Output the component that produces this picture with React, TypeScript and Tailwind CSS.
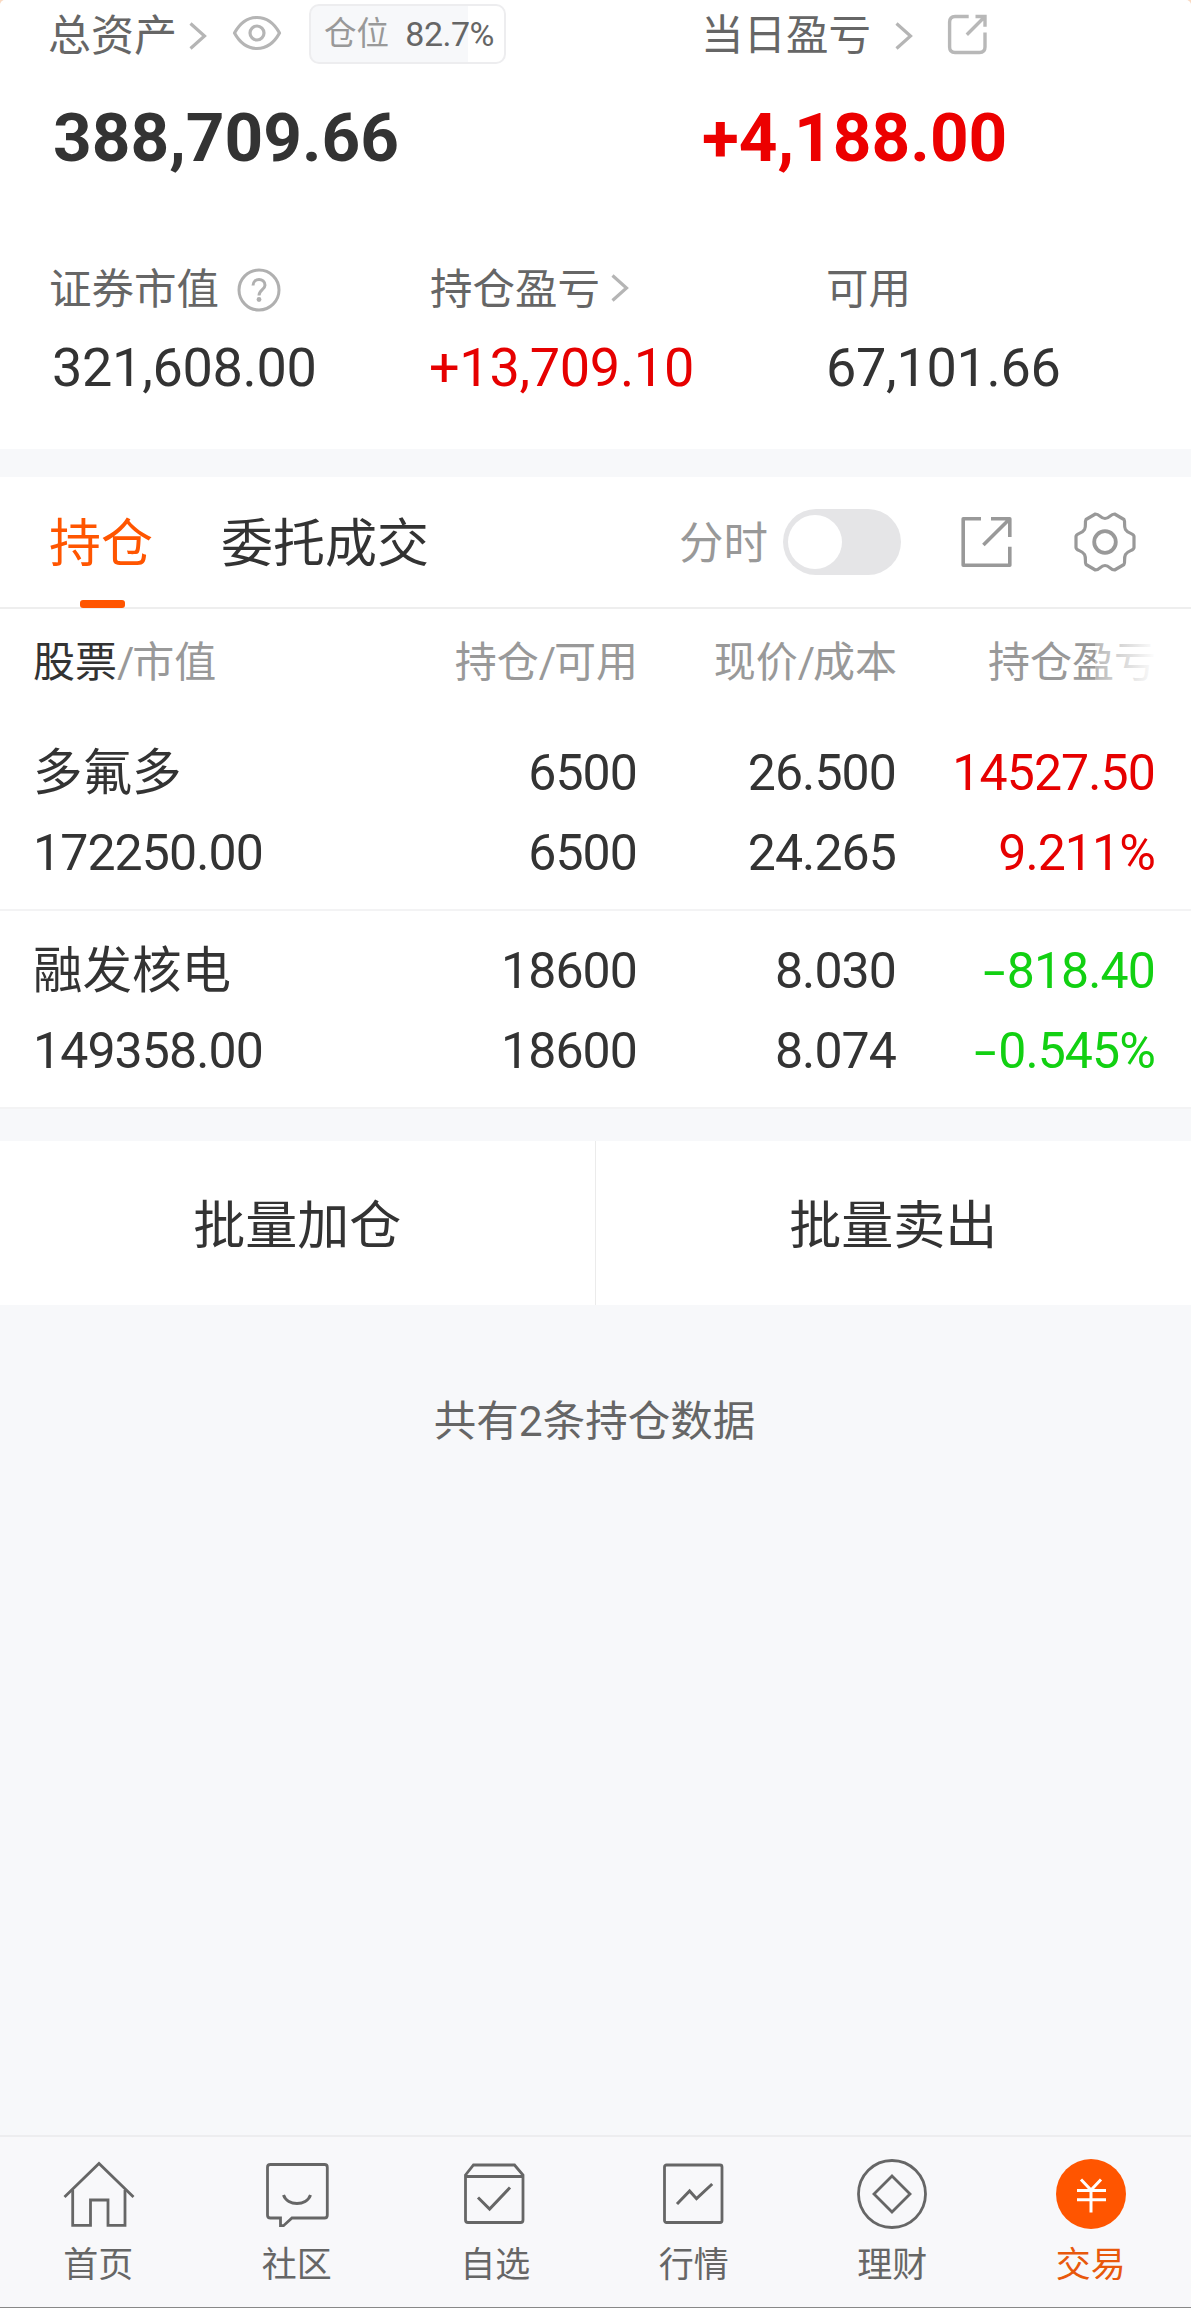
import { useState } from "react"
import type { ReactNode } from "react"

type Holding = {
  name: string
  marketValue: string
  amount: string
  available: string
  price: string
  cost: string
  profit: string
  ratio: string
  up: boolean
}

const holdings: Holding[] = [
  {
    name: "多氟多",
    marketValue: "172250.00",
    amount: "6500",
    available: "6500",
    price: "26.500",
    cost: "24.265",
    profit: "14527.50",
    ratio: "9.211%",
    up: true,
  },
  {
    name: "融发核电",
    marketValue: "149358.00",
    amount: "18600",
    available: "18600",
    price: "8.030",
    cost: "8.074",
    profit: "-818.40",
    ratio: "-0.545%",
    up: false,
  },
]

const Chevron = ({ className = "" }: { className?: string }) => (
  <svg className={`h-[30px] w-5 shrink-0 ${className}`} viewBox="0 0 20 30" fill="none" stroke="#b5b5b5" strokeWidth="3.2">
    <path d="M2.5 2.5 16.500 15 2.5 27.5" />
  </svg>
)

const EyeIcon = () => (
  <svg className="-mt-[7px] ml-6 h-9 w-[50px] shrink-0" viewBox="0 0 50 36" fill="none" stroke="#b5b5b5" strokeWidth="3.2">
    <path d="M2.5 18C8 8 16 2.500 25 2.500S42 8 47.500 18C42 28 34 33.500 25 33.500S8 28 2.500 18Z" strokeLinejoin="round" />
    <circle cx="25" cy="18" r="7" />
  </svg>
)

const ShareRound = () => (
  <svg className="-mt-[3px] ml-[32px] h-[43px] w-[43px]" viewBox="0 0 43 43" fill="none" stroke="#b8b8b8" strokeWidth="3.4">
    <path d="M22.700 3.500H9Q3.600 3.500 3.600 9V34Q3.600 39.500 9 39.500H33.500Q39 39.500 39 34V19.500M29.500 3.500H39V13.700M39 3.500 20.800 21.700" />
  </svg>
)

const ShareSquare = () => (
  <svg className="h-[53px] w-[54px]" viewBox="0 0 54 53" fill="none" stroke="#999" strokeWidth="3.6" strokeLinejoin="round">
    <path d="M21 2.700H3.200V49.300H49.800V30.700M31 2.700H49.800V21M49.800 2.700 23.400 29" />
  </svg>
)

const GearIcon = () => (
  <svg className="h-[62px] w-[62px]" viewBox="-31 -31 62 62" fill="none" stroke="#999" strokeWidth="3.2" strokeLinejoin="round">
    <path d="M0-23.500C5-23.500 5-28 9.600-28L19-22.500C20.500-20 18.500-16.500 20.500-12.500C23-8 29-9 29-5.500V5.500C29 9 23 8 20.500 12.500C18.500 16.500 20.500 20 19 22.500L9.600 28C5 28 5 23.500 0 23.500C-5 23.500-5 28-9.600 28L-19 22.500C-20.500 20-18.500 16.500-20.500 12.500C-23 8-29 9-29 5.500V-5.500C-29-9-23-8-20.500-12.500C-18.500-16.500-20.500-20-19-22.500L-9.600-28C-5-28-5-23.500 0-23.500Z" />
    <circle r="10.800" strokeWidth="3.800" />
  </svg>
)

const navItems: { label: string; icon: ReactNode }[] = [
  {
    label: "首页",
    icon: (
      <>
        <path d="M1.500 39 36 5.500 70.500 39" />
        <path d="M9.700 32V67.300H27.500V42H45V67.300H62V32" />
      </>
    ),
  },
  {
    label: "社区",
    icon: (
      <>
        <path d="M8.500 6.500H62.500Q65.300 6.500 65.300 9.300V57.200Q65.300 60 62.500 60H30L21.500 67.700H18.500V60H8.500Q5.500 60 5.500 57.200V9.300Q5.500 6.500 8.500 6.500Z" />
        <path d="M21.500 37C25.500 48.300 44.500 48.300 48.500 37" strokeWidth="3" />
      </>
    ),
  },
  {
    label: "自选",
    icon: (
      <>
        <path d="M5.500 17 13.500 7H54.500L63 17V62Q63 64.500 60.500 64.500H8Q5.500 64.500 5.500 62Z" />
        <path d="M5.500 18.500H63" />
        <path d="M18 39.500 29.600 51 50 29.500" strokeWidth="3" />
      </>
    ),
  },
  {
    label: "行情",
    icon: (
      <>
        <rect x="5.500" y="7" width="57.500" height="57.500" rx="2" />
        <path d="M18 46 30.600 33 37.500 40.700 53.200 26" strokeWidth="3" />
      </>
    ),
  },
  {
    label: "理财",
    icon: (
      <>
        <circle cx="35" cy="36" r="33.500" />
        <path d="M35 18 53 36 35 54 17 36Z" />
      </>
    ),
  },
  {
    label: "交易",
    icon: (
      <>
        <circle cx="35" cy="36" r="35" fill="#ff5500" stroke="none" />
        <path d="M25 21.500 35 32 45 21.500M35 32V54.500M21 32.500H50M21 41.700H50" stroke="#fff" strokeWidth="3" />
      </>
    ),
  },
]

const Summary = () => (
  <section className="h-[449px] shrink-0 rounded-t-[5px] bg-white text-[42.5px] text-[#666]">
    <div className="flex h-[72px] items-center whitespace-nowrap pl-[48px]">
      <div className="flex w-[653px] items-center">
        <span className="text-[43px]">总资产</span>
        <Chevron className="ml-[11px]" />
        <EyeIcon />
        <div className="-mt-1 ml-[27px] flex h-[60px] w-[197px] items-center justify-between rounded-[10px] border-2 border-[#ededef] bg-[linear-gradient(90deg,#f7f8fa_81.5%,#fff_81.5%)] pl-[13px] pr-[10px] leading-none">
          <span className="text-[32.5px] text-[#999]">仓位</span>
          <span className="text-[34px] tracking-[-0.5px]">82.7%</span>
        </div>
      </div>
      <span>当日盈亏</span>
      <Chevron className="ml-[23px]" />
      <ShareRound />
    </div>

    <div className="flex h-[132px] items-center pl-[53px] text-[67.5px] font-bold">
      <span className="w-[649px] text-[#333]">388,709.66</span>
      <span className="text-[#ec0000]">+4,188.00</span>
    </div>

    <div className="grid grid-cols-[380px_397px_1fr] pl-[50px] pt-[58px]">
      <div>
        <div className="flex h-[56px] items-center">
          <span className="-ml-px">证券市值</span>
          <svg className="ml-[18px] h-[44px] w-[44px]" viewBox="0 0 44 44" fill="none" stroke="#b0b0b0" strokeWidth="3">
            <circle cx="22" cy="22" r="20" />
            <path d="M16 17.500C16 9.500 28 9.500 28 17.200C28 21.500 22 22 22 27.500" />
            <circle cx="22" cy="31.500" r="2.400" fill="#b0b0b0" stroke="none" />
          </svg>
        </div>
        <p className="h-[99px] pl-0.5 text-[54px] leading-[99px] tracking-[-0.3px] text-[#333]">321,608.00</p>
      </div>
      <div>
        <div className="flex h-[56px] items-center">
          持仓盈亏
          <Chevron className="ml-[10px] -mt-1" />
        </div>
        <p className="h-[99px] -ml-px text-[54px] leading-[99px] tracking-[-0.3px] text-[#e60000]">+13,709.10</p>
      </div>
      <div>
        <div className="-ml-px flex h-[56px] items-center">可用</div>
        <p className="h-[99px] -ml-px text-[54px] leading-[99px] tracking-[-0.3px] text-[#333]">67,101.66</p>
      </div>
    </div>
  </section>
)

const TabBar = () => {
  const [minuteChart, setMinuteChart] = useState(false)

  return (
    <div className="mt-7 flex h-[132px] shrink-0 items-center border-b-2 border-[#eee] bg-white pl-[49px] pr-[55px] text-[52px]">
      <div className="relative flex h-full items-center text-[#ff5500]">
        <span className="mt-[5px]">持仓</span>
        <span className="absolute -bottom-px left-[31px] h-2 w-[45px] rounded-[3px] bg-[#ff5500]" />
      </div>
      <span className="ml-[68px] mt-[5px] text-[#333]">委托成交</span>
      <span className="ml-auto mt-1 text-[44.5px] text-[#999]">分时</span>
      <button
        onClick={() => setMinuteChart(!minuteChart)}
        className={`ml-[15px] flex h-[66px] w-[118px] items-center rounded-full px-[5px] ${minuteChart ? "justify-end bg-[#ff5500]" : "bg-[#e5e5e7]"}`}
      >
        <span className="size-[54px] rounded-full bg-white" />
      </button>
      <div className="ml-[59px]">
        <ShareSquare />
      </div>
      <div className="ml-[60px]">
        <GearIcon />
      </div>
    </div>
  )
}

// the hyphen of the digit font is too short for a minus sign
const Figure = ({ value, up }: { value: string; up: boolean }) => (
  <span className={up ? "text-[#e60000]" : "text-[#12d012]"}>
    {value.startsWith("-") && <span className="mr-[3px] inline-block origin-right scale-x-160">-</span>}
    {value.replace("-", "")}
  </span>
)

const HoldingTable = () => (
  <section className="shrink-0 bg-white">
    <div className="grid h-[104px] grid-cols-[345px_260px_259px_259px] items-center whitespace-nowrap pl-[33px] pt-[2px] text-right text-[42px] text-[#999]">
      <span className="text-left">
        <span className="text-[#333]">股票</span>
        <span className="tracking-[-2px]">/</span>市值
      </span>
      <span>
        持仓<span className="tracking-[-2px]">/</span>可用
      </span>
      <span>
        现价<span className="tracking-[-2px]">/</span>成本
      </span>
      <span className="relative">
        持仓盈亏
        <span className="absolute inset-y-0 right-0 w-[61px] bg-linear-to-r from-white/30 to-white" />
      </span>
    </div>

    {holdings.map((item) => (
      <div
        key={item.name}
        className="grid h-[198px] grid-cols-[345px_259px_259px_259px] grid-rows-[80px_80px] border-b-2 border-[#f3f3f4] pl-[33px] pt-5 text-right text-[50px] leading-[80px] tracking-[-0.9px] text-[#333]"
      >
        <span className="text-left text-[49.5px] tracking-normal">{item.name}</span>
        <span>{item.amount}</span>
        <span>{item.price}</span>
        <Figure value={item.profit} up={item.up} />
        <span className="text-left">{item.marketValue}</span>
        <span>{item.available}</span>
        <span>{item.cost}</span>
        <Figure value={item.ratio} up={item.up} />
      </div>
    ))}
  </section>
)

const BottomNav = () => (
  <nav className="mt-auto grid h-[173px] shrink-0 grid-cols-6 border-b border-t-2 border-b-[#888] border-t-[#ededef] bg-[#f8f8fa]">
    {navItems.map((item) => (
      <div key={item.label} className="flex flex-col items-center pt-[21px]">
        <svg className="size-[72px]" viewBox="0 0 72 72" fill="none" stroke="#666" strokeWidth="2.800">
          {item.icon}
        </svg>
        <span className={`mt-4 mr-0.5 text-[35px] leading-[40px] ${item.label === "交易" ? "text-[#e8580c]" : "text-[#666]"}`}>
          {item.label}
        </span>
      </div>
    ))}
  </nav>
)

const App = () => {
  return (
    <div className="bg-[#fbd9c0]">
      <main className="flex h-[2308px] w-[1191px] flex-col overflow-hidden rounded-t-[5px] bg-[#f7f8fa] font-['Roboto','Noto_Sans_CJK_SC',sans-serif]">
        <Summary />
        <TabBar />
        <HoldingTable />

        <div className="mt-8 grid h-[164px] shrink-0 grid-cols-2 bg-white text-[52px] text-[#333]">
          <button className="border-r border-[#ebebeb] pt-2">批量加仓</button>
          <button className="pt-2">批量卖出</button>
        </div>

        <p className="pr-0.5 pt-[87px] text-center text-[42.5px] leading-[60px] text-[#666]">共有2条持仓数据</p>

        <BottomNav />
      </main>
    </div>
  )
}

export default App
